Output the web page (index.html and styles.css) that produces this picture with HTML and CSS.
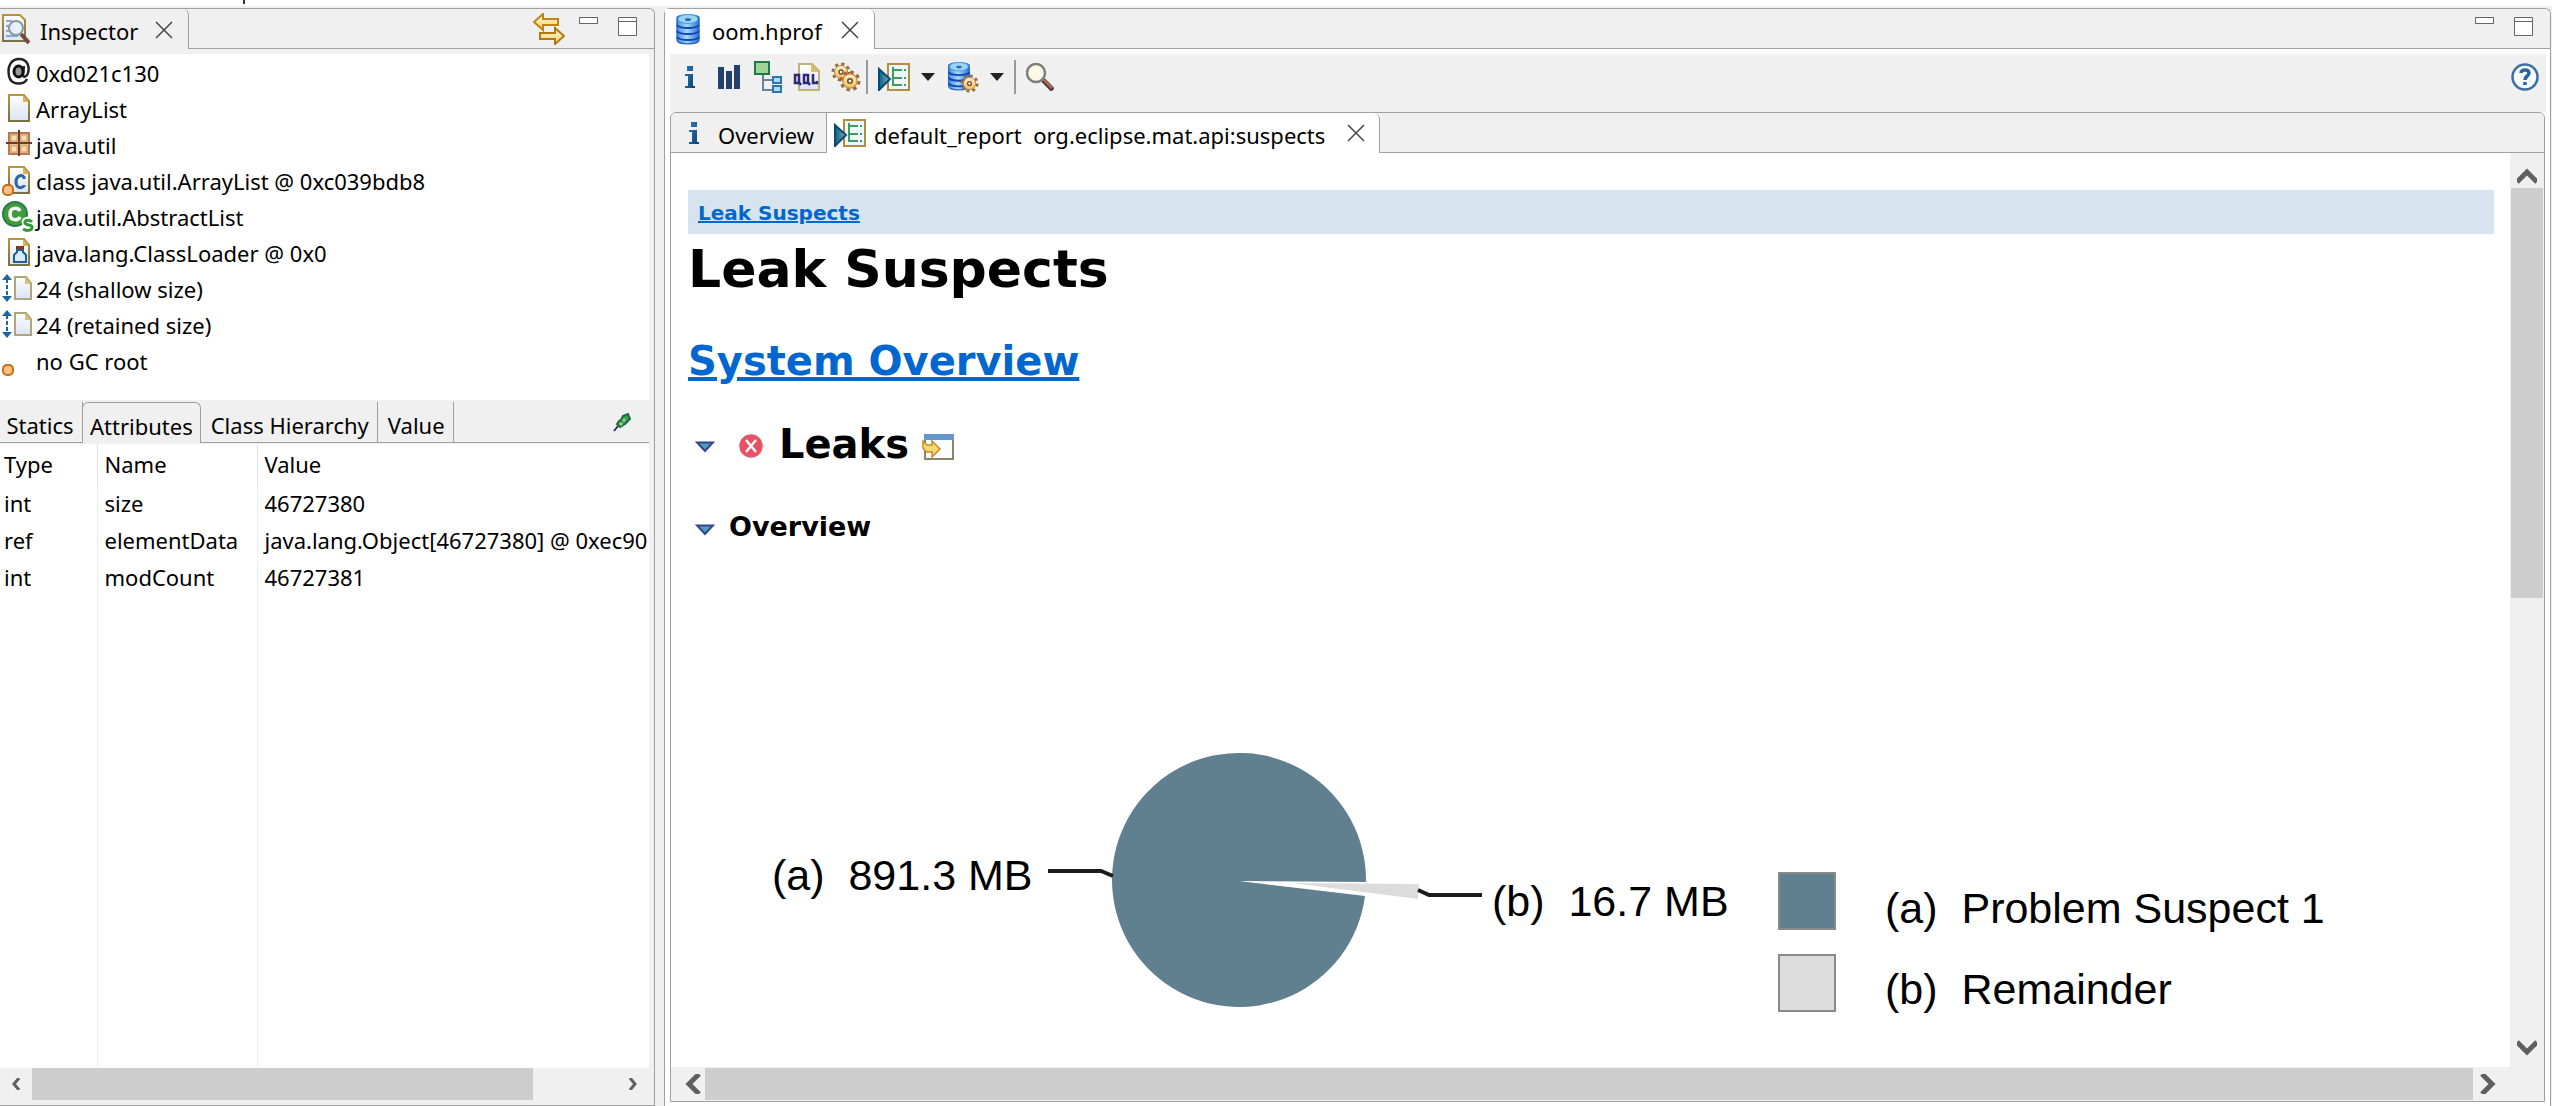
FILE: index.html
```html
<!DOCTYPE html>
<html lang="en">
<head>
<meta charset="utf-8">
<title>oom.hprof - Memory Analyzer</title>
<link rel="stylesheet" href="styles.css">
</head>
<body>
<svg class="defs" aria-hidden="true">
  <defs>
    <linearGradient id="gPage" x1="0" y1="0" x2="0" y2="1"><stop offset="0" stop-color="#fff"/><stop offset="1" stop-color="#d9e4f5"/></linearGradient>
    <linearGradient id="gEdge" x1="0" y1="0" x2="0" y2="1"><stop offset="0" stop-color="#bb9434"/><stop offset="1" stop-color="#7c7040"/></linearGradient>
    <linearGradient id="gInfo" x1="0" y1="0" x2="1" y2="1"><stop offset="0" stop-color="#2d7cba"/><stop offset="1" stop-color="#0b4077"/></linearGradient>
    <linearGradient id="gGold" x1="0" y1="0" x2="0" y2="1"><stop offset="0" stop-color="#fffbe0"/><stop offset="1" stop-color="#f5cf62"/></linearGradient>
    <linearGradient id="gDb" x1="0" y1="0" x2="1" y2="0"><stop offset="0" stop-color="#3d8fe0"/><stop offset=".45" stop-color="#a5daf7"/><stop offset="1" stop-color="#2c6fd0"/></linearGradient>
    <linearGradient id="gGear" x1="0" y1="0" x2="0" y2="1"><stop offset="0" stop-color="#fdf3d0"/><stop offset="1" stop-color="#f2bd50"/></linearGradient>
    <linearGradient id="gTri" x1="0" y1="0" x2="1" y2="0"><stop offset="0" stop-color="#0f5f80"/><stop offset="1" stop-color="#6fb3c4"/></linearGradient>
  </defs>
  <symbol id="page" viewBox="0 0 32 32"><path d="M7 2H22L27 8V28H7Z" fill="url(#gPage)" stroke="url(#gEdge)" stroke-width="2"/><path d="M21 2V9H27Z" fill="#d9b35c"/></symbol>
  <symbol id="size" viewBox="0 0 32 32"><path d="M13 4H24L29 10V26H13Z" fill="url(#gPage)" stroke="#b0a67c" stroke-width="2"/><path d="M23 4V11H29Z" fill="#dcbf78"/><path d="M5 1L10 7H0ZM5 29L10 23H0Z" fill="#1f66a0"/><path d="M5 6V24" stroke="#1f66a0" stroke-width="2" stroke-dasharray="4 2"/></symbol>
  <symbol id="dot" viewBox="0 0 32 32"><rect x="1" y="20" width="10" height="10" rx="4" fill="#ffbf80" stroke="#c2701c" stroke-width="2"/></symbol>
  <symbol id="info" viewBox="0 0 12 24"><path d="M3 1H9V6H3ZM1 9H9V21H11V23H1V21H4V11H1Z" fill="url(#gInfo)"/></symbol>
  <symbol id="report" viewBox="0 0 32 28"><rect x="10" y="1" width="21" height="26" fill="#eef6fa" stroke="#b28d3d" stroke-width="2"/><path d="M15 4V23M15 7H24M15 15H24M15 22H24" stroke="#3d9a63" stroke-width="2" fill="none"/><path d="M26 7H28M26 15H28M26 22H28" stroke="#3d9a63" stroke-width="2"/><path d="M1 6V27L12 16Z" fill="url(#gTri)" stroke="#0d4a73" stroke-width="2"/></symbol>
  <symbol id="db" viewBox="0 0 24 32"><path d="M1 5C1 1 23 1 23 5V27C23 32 1 32 1 27Z" fill="url(#gDb)" stroke="#2a6fc8" stroke-width="1.500"/><ellipse cx="12" cy="6" rx="10" ry="4.500" fill="#9cd3f5" stroke="#4a9fdc"/><ellipse cx="12" cy="6.500" rx="3" ry="1.500" fill="#1c6fb0"/><path d="M1 12C4 16 20 16 23 12M1 18C4 22 20 22 23 18M1 24C4 28 20 28 23 24" fill="none" stroke="#1440b8" stroke-width="2"/></symbol>
  <symbol id="gear" viewBox="0 0 20 20"><circle cx="10" cy="10" r="8" fill="none" stroke="#9a6a3c" stroke-width="3" stroke-dasharray="3.140 3.140"/><circle cx="10" cy="10" r="6.500" fill="url(#gGear)" stroke="#b88545" stroke-width="1"/><circle cx="10" cy="10" r="2" fill="#fff" stroke="#7c4d2a" stroke-width="1.500"/></symbol>
  <symbol id="close" viewBox="0 0 18 18"><path d="M1 1L17 17M17 1L1 17" stroke="#444" stroke-width="1.500" fill="none"/></symbol>
  <symbol id="min" viewBox="0 0 20 20"><rect x=".5" y=".5" width="18" height="6" fill="#fff" stroke="#666"/></symbol>
  <symbol id="max" viewBox="0 0 20 20"><path d="M.5 .5H18.500V18.500H.5ZM.5 4.500H18.500" fill="#fff" stroke="#666"/></symbol>
  <symbol id="twist" viewBox="0 0 20 12"><path d="M2 1.500H18L10 10Z" fill="#4d9fb3" stroke="#33478f" stroke-width="2"/></symbol>
  <symbol id="drop" viewBox="0 0 14 8"><path d="M0 0H14L7 8Z" fill="#222"/></symbol>
</svg>

<div class="strip"></div>
<main class="workbench">
  <section class="panel inspector" aria-label="Inspector">
    <header class="panel-head">
      <div class="tab-main">
        <svg class="i28" viewBox="0 0 28 30"><path d="M1 1H18L23 6V27H1Z" fill="url(#gPage)" stroke="url(#gEdge)" stroke-width="2"/><path d="M4 7H10M4 12H8M4 17H8M4 22H16" stroke="#88a3d8" stroke-width="2"/><path d="M19 20L27 29" stroke="#774840" stroke-width="4"/><circle cx="14" cy="14" r="7" fill="#e6f1fa" fill-opacity=".9" stroke="#8c97a3" stroke-width="2"/></svg>
        <span>Inspector</span>
        <button class="ghost close" aria-label="Close Inspector"><svg><use href="#close"/></svg></button>
      </div>
      <div class="head-rest">
        <button class="ghost" aria-label="Link with snapshot"><svg class="i32" viewBox="0 0 32 32"><path d="M1 9L10 1V6H25V12H10V17Z" fill="url(#gGold)" stroke="#c08316" stroke-width="2"/><path d="M31 23L22 15V20H7V26H22V31Z" fill="url(#gGold)" stroke="#b37a12" stroke-width="2"/></svg></button>
        <button class="ghost" aria-label="Minimize"><svg class="i20"><use href="#min"/></svg></button>
        <button class="ghost" aria-label="Maximize"><svg class="i20"><use href="#max"/></svg></button>
      </div>
    </header>
    <div class="inspector-body">
      <ul class="facts">
        <li><svg class="i32" viewBox="0 0 32 32"><path d="M25 22C22 28 9 29 7 19C5 8 10 2 17 2C25 2 28 9 26 16C25 20 21 21 21 18L22 9" fill="none" stroke="#222" stroke-width="2.500"/><ellipse cx="16.500" cy="14.500" rx="4.500" ry="5.500" fill="#999" stroke="#111" stroke-width="3"/></svg>0xd021c130</li>
        <li><svg class="i32"><use href="#page"/></svg>ArrayList</li>
        <li><svg class="i32" viewBox="0 0 32 32"><rect x="7" y="4" width="20" height="21" fill="#e9bd8c" stroke="#b87954" stroke-width="2"/><path d="M9 6H15V12H9ZM19 6H25V12H19ZM9 17H15V23H9ZM19 17H25V23H19Z" fill="#f6dfae" stroke="#cf9a6c"/><path d="M17 1V27M4 14H30" stroke="#6e3a2c" stroke-width="2"/></svg>java.util</li>
        <li><svg class="i32" viewBox="0 0 32 32"><use href="#page" width="32" height="32"/><path d="M22 14V12C19 9 14 11 14 17C14 23 19 24 22 21V20" fill="none" stroke="#2b68a3" stroke-width="3"/><use href="#dot" width="32" height="32"/></svg>class java.util.ArrayList @ 0xc039bdb8</li>
        <li><svg class="i32" viewBox="0 0 32 32"><circle cx="13" cy="13" r="12" fill="#3f9c3a" stroke="#2c7a4e" stroke-width="2"/><path d="M18 10C16 6 8 6 8 13C8 20 16 20 18 16" fill="none" stroke="#fff" stroke-width="3.500"/><path d="M30 20C27 17 21 19 23 22C24 25 31 23 30 27C29 30 24 30 21 28" fill="none" stroke="#fff" stroke-width="6"/><path d="M30 21C27 18 22 19 23 22C24 25 31 23 30 27C29 30 24 30 21 28" fill="none" stroke="#35983a" stroke-width="3"/></svg>java.util.AbstractList</li>
        <li><svg class="i32" viewBox="0 0 32 32"><use href="#page" width="32" height="32"/><path d="M14 9H22V13H14Z" fill="#8c3310"/><path d="M15 13H21V15L24 18V25H12V18L15 15Z" fill="#d6ecff" stroke="#215d96" stroke-width="2"/></svg>java.lang.ClassLoader @ 0x0</li>
        <li><svg class="i32"><use href="#size"/></svg>24 (shallow size)</li>
        <li><svg class="i32"><use href="#size"/></svg>24 (retained size)</li>
        <li><svg class="i32"><use href="#dot"/></svg>no GC root</li>
      </ul>
      <div class="subtabs" role="tablist">
        <button class="subtab first" role="tab">Statics</button>
        <button class="subtab active" role="tab" aria-selected="true">Attributes</button>
        <button class="subtab" role="tab">Class Hierarchy</button>
        <button class="subtab" role="tab">Value</button>
        <div class="subtab-rest"><button class="ghost" aria-label="Pin tab"><svg class="i20" viewBox="0 0 20 20"><path d="M2 19L6 14" stroke="#23355c" stroke-width="2"/><path d="M11 4L16 2L18 7L13 12L8 15L5 12L7 9L9 8Z" fill="#3aa356" stroke="#1d6e40" stroke-width="2"/><path d="M11 7L13 9M8 11L10 13" stroke="#a3c98a" stroke-width="3"/></svg></button></div>
      </div>
      <div class="table-area">
        <table class="attrs">
          <thead><tr><th class="c-type">Type</th><th class="c-name">Name</th><th>Value</th></tr></thead>
          <tbody>
            <tr><td>int</td><td>size</td><td>46727380</td></tr>
            <tr><td>ref</td><td>elementData</td><td>java.lang.Object[46727380] @ 0xec90</td></tr>
            <tr><td>int</td><td>modCount</td><td>46727381</td></tr>
            <tr class="fill"><td></td><td></td><td></td></tr>
          </tbody>
        </table>
      </div>
      <div class="hbar small">
        <button class="ghost arrow" aria-label="Scroll left"><svg viewBox="0 0 10 12"><path d="M8 0L3 6L8 12" /></svg></button>
        <div class="track"><div class="thumb"></div><div class="space"></div></div>
        <button class="ghost arrow" aria-label="Scroll right"><svg viewBox="0 0 10 12"><path d="M2 0L7 6L2 12" /></svg></button>
      </div>
    </div>
  </section>

  <section class="panel editor" aria-label="Editor">
    <header class="panel-head">
      <div class="tab-main">
        <svg class="dbicon"><use href="#db"/></svg>
        <span>oom.hprof</span>
        <button class="ghost close" aria-label="Close oom.hprof"><svg><use href="#close"/></svg></button>
      </div>
      <div class="head-rest">
        <button class="ghost" aria-label="Minimize"><svg class="i20"><use href="#min"/></svg></button>
        <button class="ghost" aria-label="Maximize"><svg class="i20"><use href="#max"/></svg></button>
      </div>
    </header>
    <div class="editor-body">
      <div class="toolbar" role="toolbar">
        <button class="ghost tool" aria-label="Overview"><svg width="12" height="24"><use href="#info"/></svg></button>
        <button class="ghost tool" aria-label="Histogram"><svg width="22" height="24"><path d="M0 2H6V24H0ZM8 6H14V24H8ZM16 0H22V24H16Z" fill="#23416f"/></svg></button>
        <button class="ghost tool" aria-label="Dominator tree"><svg width="28" height="32"><path d="M9 13V29H18M9 19H18" fill="none" stroke="#6683a3" stroke-width="2"/><rect x="1" y="1" width="14" height="12" fill="#9ed49a" stroke="#1f7a4a" stroke-width="2"/><path d="M19 16H27V22H19ZM19 25H27V31H19Z" fill="#a9dcf8" stroke="#2c74b5" stroke-width="2"/></svg></button>
        <button class="ghost tool" aria-label="Open query language"><svg width="28" height="28"><path d="M6 1H19L26 8V27H6Z" fill="url(#gPage)" stroke="#c3b178" stroke-width="2"/><path d="M18 1V9H26Z" fill="#e0bd68"/><path d="M2 12H6V20H2ZM5 18L8 22M11 12H15V20H11ZM14 18L17 22M20 11V20H24V18" fill="none" stroke="#2f2a72" stroke-width="2.500"/></svg></button>
        <button class="ghost tool" aria-label="Threads"><svg width="30" height="30"><use href="#gear" width="20" height="20"/><use href="#gear" x="8" y="8" width="22" height="22"/></svg></button>
        <span class="sep"></span>
        <button class="ghost tool report-tool" aria-label="Run expert system test"><svg width="32" height="28"><use href="#report"/></svg></button>
        <button class="ghost tool drop" aria-label="Expert test menu"><svg width="14" height="8"><use href="#drop"/></svg></button>
        <button class="ghost tool report-tool" aria-label="Query browser"><svg width="32" height="32"><use href="#db" width="24" height="30"/><use href="#gear" x="13" y="13" width="19" height="19"/></svg></button>
        <button class="ghost tool drop" aria-label="Query menu"><svg width="14" height="8"><use href="#drop"/></svg></button>
        <span class="sep loose"></span>
        <button class="ghost tool find" aria-label="Find object"><svg width="28" height="28"><path d="M17 17L27 27" stroke="#5c3a34" stroke-width="5"/><path d="M18 17L26 25" stroke="#b5745a" stroke-width="2"/><circle cx="10" cy="10" r="9" fill="#fdf9e6" stroke="#7d7f7a" stroke-width="2.500"/></svg></button>
        <button class="ghost tool help" aria-label="Help"><svg width="28" height="28"><circle cx="14" cy="14" r="12.500" fill="#f4fbff" stroke="#3b6ea5" stroke-width="2.500"/><path d="M10 10C10 6 18 6 18 10C18 13 14 13 14 17M14 19V22" fill="none" stroke="#2763a0" stroke-width="3.500"/></svg></button>
      </div>
      <div class="pages">
        <div class="page-tabs" role="tablist">
          <button class="page-tab" role="tab"><svg width="12" height="24"><use href="#info"/></svg>Overview</button>
          <div class="page-tab active" role="tab" aria-selected="true"><svg width="32" height="28"><use href="#report"/></svg><span class="pre">default_report  org.eclipse.mat.api:suspects</span><button class="ghost close" aria-label="Close report"><svg><use href="#close"/></svg></button></div>
          <div class="page-rest"></div>
        </div>
        <div class="page-view">
          <article class="report">
            <nav class="crumbs"><a href="#leaks">Leak Suspects</a></nav>
            <h1>Leak Suspects</h1>
            <h2><a href="#overview">System Overview</a></h2>
            <h2 class="leaks" id="leaks">
              <svg class="twist"><use href="#twist"/></svg>
              <svg class="err" viewBox="0 0 24 24"><circle cx="12" cy="12" r="11" fill="#ea4f62" stroke="#d9606c" stroke-width="1.500"/><path d="M7 6L17 18M17 6L7 18" stroke="#fff" stroke-width="2.500"/></svg>
              <span>Leaks</span>
              <svg class="win" viewBox="0 0 32 26"><rect x="3" y="1" width="28" height="24" fill="#fcfdff" stroke="#8c8468" stroke-width="2"/><path d="M2 0H32V6H2Z" fill="#6597cc"/><path d="M1 7L5 11H10V7L18 15L10 23V18H4L1 14Z" fill="#f6d96f" stroke="#c08d28" stroke-width="1.500"/></svg>
            </h2>
            <h3 id="overview"><svg class="twist"><use href="#twist"/></svg><span>Overview</span></h3>
            <svg class="chart" viewBox="0 0 1700 460" role="img" aria-label="Leak suspects by retained size">
              <path d="M551 280L678 281A127 127 0 1 0 677 295Z" fill="#61808f"/>
              <path d="M604 282L731 283L730 298Z" fill="#dcdcdc"/>
              <path d="M360 270H413L425 275M730 289L741 294H794" fill="none" stroke="#1c1c1c" stroke-width="4"/>
              <text x="84" y="289">(a)  891.3 MB</text>
              <text x="804" y="315">(b)  16.7 MB</text>
              <rect x="1091" y="272" width="56" height="56" fill="#61808f" stroke="#8a8a8a" stroke-width="2"/>
              <rect x="1091" y="354" width="56" height="56" fill="#dcdcdc" stroke="#8a8a8a" stroke-width="2"/>
              <text x="1197" y="322">(a)  Problem Suspect 1</text>
              <text x="1197" y="403">(b)  Remainder</text>
            </svg>
          </article>
          <div class="vbar">
            <button class="ghost arrow" aria-label="Scroll up"><svg viewBox="0 0 20 16"><path d="M0 14L10 4L20 14"/></svg></button>
            <div class="track"><div class="thumb"></div><div class="space"></div></div>
            <button class="ghost arrow" aria-label="Scroll down"><svg viewBox="0 0 20 16"><path d="M0 2L10 12L20 2"/></svg></button>
          </div>
          <div class="hbar large">
            <button class="ghost arrow" aria-label="Scroll left"><svg viewBox="0 0 16 20"><path d="M14 0L4 10L14 20"/></svg></button>
            <div class="track"><div class="thumb"></div></div>
            <button class="ghost arrow" aria-label="Scroll right"><svg viewBox="0 0 16 20"><path d="M2 0L12 10L2 20"/></svg></button>
          </div>
        </div>
      </div>
    </div>
  </section>
</main>
</body>
</html>
```
FILE: styles.css
```css
* { box-sizing: border-box; }
body {
  margin: 0;
  height: 100vh;
  display: flex;
  flex-direction: column;
  overflow: hidden;
  background: #fff;
  color: #000;
  font: 22px/36px "Noto Sans", "Open Sans", sans-serif;
}
svg { display: block; flex: none; }
.defs { position: absolute; width: 0; height: 0; }
button { font: inherit; color: inherit; margin: 0; border-radius: 0; }
.ghost { border: 0; padding: 0; background: none; }
.i20 { width: 20px; height: 20px; }
.i28 { width: 28px; height: 30px; }
.i32 { width: 32px; height: 32px; }

.strip { height: 6px; flex: none; }
.strip::after { content: ""; display: block; width: 2px; height: 4px; margin-left: 243px; background: #20304a; }
.workbench {
  flex: 1;
  min-height: 0;
  display: grid;
  grid-template-columns: minmax(0, 655fr) minmax(0, 1887fr);
  column-gap: 9px;
  padding: 2px 1px 0 0;
  background: #f0f0f0;
}
.panel { display: flex; flex-direction: column; min-width: 0; min-height: 0; border: 1px solid #a0a0a0; }
.inspector { border-left: 0; border-top-right-radius: 6px; }
.editor { background: #fff; border-bottom: 0; border-radius: 6px 6px 0 0; }

/* view title bars */
.panel-head { display: flex; height: 40px; flex: none; }
.tab-main {
  display: flex;
  align-items: center;
  border-right: 1px solid #a0a0a0;
  border-top-right-radius: 6px;
}
.tab-main span { padding-top: 4px; }
.inspector .tab-main { width: 189px; padding-left: 2px; gap: 10px; }
.editor .tab-main { width: 210px; padding-left: 11px; gap: 12px; background: #fff; }
.tab-main .close { margin-left: auto; margin-right: 15px; padding-top: 2px; }
.close svg { width: 18px; height: 18px; }
.dbicon { width: 24px; height: 32px; }
.head-rest {
  flex: 1;
  display: flex;
  justify-content: flex-end;
  align-items: flex-start;
  gap: 19px;
  padding: 8px 16px 0 0;
  background: #f0f0f0;
  border-bottom: 1px solid #a0a0a0;
  border-top-right-radius: 6px;
}
.inspector .head-rest { padding-top: 4px; gap: 14px; }
.inspector .head-rest .i20 { margin: 4px 0 0 0; }
.inspector .head-rest button + button + button { margin-left: 5px; }

/* inspector */
.inspector-body { flex: 1; min-height: 0; display: flex; flex-direction: column; padding: 5px 5px 5px 0; }
.facts { margin: 0; padding: 1px 0 21px 2px; list-style: none; background: #fff; }
.facts li { display: flex; align-items: center; gap: 2px; height: 36px; white-space: nowrap; }
.subtabs { display: flex; height: 44px; flex: none; padding-top: 2px; background: #f0f0f0; white-space: nowrap; }
.subtab {
  height: 41px;
  padding: 5px 8px 0 10px;
  background: #f0f0f0;
  border: 0 solid #a0a0a0;
  border-width: 0 1px 1px 0;
}
.subtab.first { width: 83px; padding: 5px 7px 0 5px; }
.subtab.active { padding: 5px 7px 0; border-width: 1px 1px 0 1px; border-radius: 6px 6px 0 0; margin-left: -1px; }
.subtab-rest { flex: 1; display: flex; justify-content: flex-end; align-items: center; padding-right: 17px; height: 41px; border-bottom: 1px solid #a0a0a0; }
.table-area { flex: 1; min-height: 0; overflow: hidden; background: #fff; }
.attrs { width: 100%; height: 100%; table-layout: fixed; border-collapse: collapse; }
.attrs th, .attrs td { height: 37px; padding: 0 0 0 7px; text-align: left; font-weight: 400; white-space: nowrap; overflow: hidden; border-left: 1px solid #e6eef8; }
.attrs th { height: 40px; border-color: #e0e0e0; }
.attrs th:first-child, .attrs td:first-child { border-left: 0; padding-left: 4px; }
.attrs .fill td { height: auto; }
.c-type { width: 97px; }
.c-name { width: 160px; }

/* scroll bars */
.hbar, .vbar { display: flex; background: #f0f0f0; }
.vbar { flex-direction: column; width: 34px; padding: 1px 1px 0; }
.track { flex: 1; display: flex; min-width: 0; min-height: 0; }
.vbar .track { flex-direction: column; }
.thumb { background: #cdcdcd; }
.arrow { display: grid; place-items: center; }
.arrow path { fill: none; stroke: #606060; stroke-width: 5; }
.hbar.small { height: 32px; flex: none; }
.small .arrow { width: 32px; }
.small .arrow svg { width: 10px; height: 12px; }
.small .arrow path { stroke-width: 3; }
.small .thumb { flex: 501; }
.small .space { flex: 84; }
.large { grid-column: 1 / 3; height: 34px; padding: 1px 37px 1px 0; }
.large .arrow { width: 34px; padding-right: 4px; }
.large .arrow:first-child { padding: 0 0 0 10px; }
.large .arrow svg { width: 16px; height: 20px; }
.large .thumb { flex: 1; }
.vbar .arrow { height: 34px; padding-bottom: 4px; }
.vbar .arrow:first-child { padding: 10px 0 0; }
.vbar .arrow svg { width: 20px; height: 16px; }
.vbar .thumb { flex: 411; }
.vbar .space { flex: 436; }

/* editor */
.editor-body { flex: 1; min-height: 0; display: flex; flex-direction: column; padding: 5px 4px 4px 5px; }
.toolbar { display: flex; align-items: center; height: 58px; flex: none; padding-bottom: 12px; background: #f0f0f0; }
.tool { display: grid; place-items: center; width: 39px; height: 34px; }
.report-tool { width: 49px; }
.drop { width: 20px; }
.find { width: 32px; }
.help { width: 28px; margin-left: auto; margin-right: 7px; }
.sep { width: 2px; height: 34px; margin: 0 1px; background: #999; }
.sep.loose { margin: 0 8px 0 7px; }
.pages { flex: 1; min-height: 0; display: flex; flex-direction: column; border: 1px solid #a0a0a0; border-radius: 6px 6px 0 0; margin-right: 1px; background: #fff; }
.page-tabs { display: flex; height: 40px; flex: none; }
.page-tab {
  display: flex;
  align-items: center;
  background: #f0f0f0;
  border: 0 solid #a0a0a0;
  border-width: 0 1px 1px 0;
  padding: 4px 9px 0 17px;
  gap: 18px;
  width: 156px;
  border-top-left-radius: 6px;
}
.page-tab svg { margin-top: -4px; }
.page-tab.active { width: 553px; background: #fff; border-bottom: 0; padding: 4px 14px 0 7px; gap: 8px; border-radius: 6px 6px 0 0; }
.page-tab .close { margin-left: auto; }
.page-rest { flex: 1; background: #f0f0f0; border-bottom: 1px solid #a0a0a0; border-top-right-radius: 6px; }
.pre { white-space: pre; }
.page-view { flex: 1; min-height: 0; display: grid; grid-template: minmax(0, 1fr) auto / minmax(0, 1fr) auto; }

/* report document */
.report { overflow: hidden; padding: 37px 16px 0 17px; font-family: "DejaVu Sans", Verdana, sans-serif; font-weight: 700; }
.report a { color: #0066d0; }
.crumbs { height: 44px; padding: 0 10px; background: #d7e4ef; font-size: 20px; line-height: 46px; }
h1, h2, h3 { margin: 0; }
h1 { font-size: 52px; line-height: 70px; }
h2 { margin-top: 33px; font-size: 40px; line-height: 48px; }
h2.leaks { display: flex; align-items: center; margin-top: 35px; padding-left: 7px; }
h3 { display: flex; align-items: center; gap: 14px; margin-top: 43px; padding-left: 7px; font-size: 27px; line-height: 32px; }
.twist { width: 20px; height: 12px; margin-top: 6px; }
.err { width: 24px; height: 24px; margin: 4px 16px 0 24px; }
.win { width: 32px; height: 26px; margin: 5px 0 0 13px; }
.chart { width: 1700px; height: 460px; margin-top: 58px; }
.chart text { font: 43px "Liberation Sans", Arial, sans-serif; white-space: pre; }
```
